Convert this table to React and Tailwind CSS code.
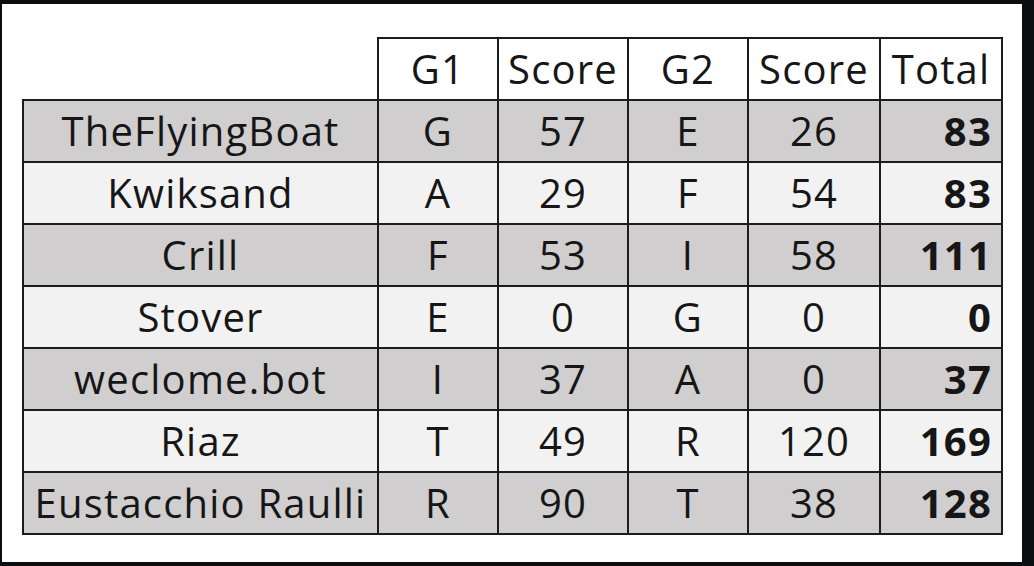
import React from 'react'

const ROWS = [
  { name: 'TheFlyingBoat', g1: 'G', s1: 57, g2: 'E', s2: 26, total: 83 },
  { name: 'Kwiksand', g1: 'A', s1: 29, g2: 'F', s2: 54, total: 83 },
  { name: 'Crill', g1: 'F', s1: 53, g2: 'I', s2: 58, total: 111 },
  { name: 'Stover', g1: 'E', s1: 0, g2: 'G', s2: 0, total: 0 },
  { name: 'weclome.bot', g1: 'I', s1: 37, g2: 'A', s2: 0, total: 37 },
  { name: 'Riaz', g1: 'T', s1: 49, g2: 'R', s2: 120, total: 169 },
  { name: 'Eustacchio Raulli', g1: 'R', s1: 90, g2: 'T', s2: 38, total: 128 },
]

const cell = 'border-2 border-[#1c1c1c] h-[62px] p-0 text-center'

export default function App() {
  return (
    <div className="w-[1034px] h-[566px] bg-[#0c0d0e] pt-[4px] pl-[2px] pr-[12px] pb-[4px]">
      <div className="w-full h-full bg-white pl-[20px] pt-[33px] font-['Open_Sans',sans-serif] text-[40px] tracking-[0.03em] leading-none text-[#161616]">
        <table className="border-collapse table-fixed">
          <colgroup>
            <col className="w-[355px]" />
            <col className="w-[120px]" />
            <col className="w-[130px]" />
            <col className="w-[120px]" />
            <col className="w-[132px]" />
            <col className="w-[122px]" />
          </colgroup>
          <thead>
            <tr className="bg-white">
              <th className="h-[62px] p-0 border-b-2 border-[#1c1c1c]"></th>
              <th className={`${cell} font-normal`}>G1</th>
              <th className={`${cell} font-normal`}>Score</th>
              <th className={`${cell} font-normal`}>G2</th>
              <th className={`${cell} font-normal`}>Score</th>
              <th className={`${cell} font-normal`}>Total</th>
            </tr>
          </thead>
          <tbody>
            {ROWS.map((row, i) => (
              <tr key={row.name} className={i % 2 === 0 ? 'bg-[#d0cece]' : 'bg-[#f2f2f2]'}>
                <td className={cell}>{row.name}</td>
                <td className={cell}>{row.g1}</td>
                <td className={cell}>{row.s1}</td>
                <td className={cell}>{row.g2}</td>
                <td className={cell}>{row.s2}</td>
                <td className={`${cell} text-right pr-[9px] font-bold`}>{row.total}</td>
              </tr>
            ))}
          </tbody>
        </table>
      </div>
    </div>
  )
}
